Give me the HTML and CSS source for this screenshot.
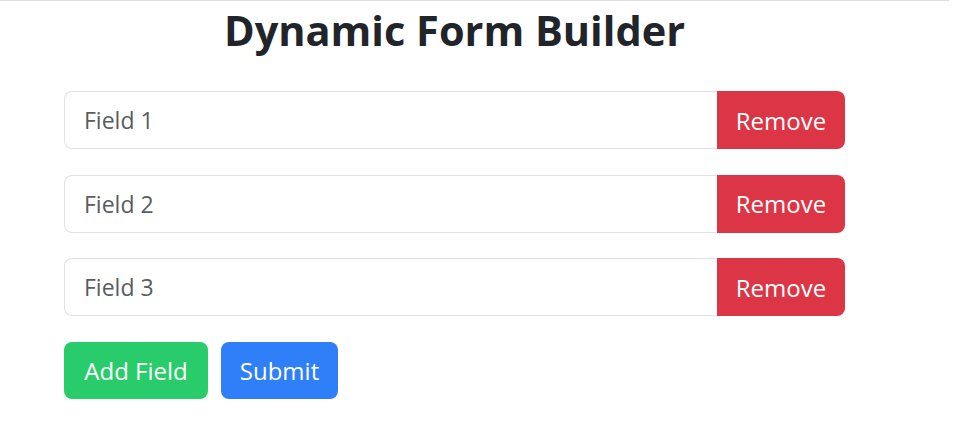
FILE: index.html
```html
<!DOCTYPE html>
<html lang="en">
<head>
<meta charset="utf-8">
<title>Dynamic Form Builder</title>
<link rel="stylesheet" href="styles.css">
</head>
<body>
<div class="top-rule"></div>
<main class="builder">
  <h1 class="title">Dynamic Form Builder</h1>
  <form class="form">
    <div class="field-row">
      <input class="field-input" type="text" placeholder="Field 1">
      <button type="button" class="btn btn-remove">Remove</button>
    </div>
    <div class="field-row">
      <input class="field-input" type="text" placeholder="Field 2">
      <button type="button" class="btn btn-remove">Remove</button>
    </div>
    <div class="field-row">
      <input class="field-input" type="text" placeholder="Field 3">
      <button type="button" class="btn btn-remove">Remove</button>
    </div>
    <div class="actions">
      <button type="button" class="btn btn-add">Add Field</button>
      <button type="submit" class="btn btn-submit">Submit</button>
    </div>
  </form>
</main>
</body>
</html>
```
FILE: styles.css
```css
* { box-sizing: border-box; }

html, body {
  margin: 0;
  padding: 0;
  background: #ffffff;
}

body {
  font-family: "Open Sans", "Noto Sans", "Liberation Sans", sans-serif;
  color: #212529;
}

.top-rule {
  width: 949px;
  height: 1px;
  background: #dedede;
}

.builder {
  width: 781px;
  margin-left: 64px;
}

.title {
  margin: 0;
  padding-top: 2px;
  height: 90px;
  text-align: center;
  font-size: 41.5px;
  font-weight: 700;
  line-height: 54px;
  color: #212529;
}

.form {
  display: flex;
  flex-direction: column;
  gap: 25.5px;
}

.field-row {
  display: flex;
  height: 58px;
}

.field-input {
  flex: 1;
  min-width: 0;
  height: 58px;
  padding: 0 19px;
  border: 1px solid #dee2e6;
  border-right: none;
  border-radius: 8px 0 0 8px;
  font-family: inherit;
  font-size: 23px;
  color: #212529;
  background: #fff;
  outline: none;
}

.field-input::placeholder {
  color: #595c5f;
  opacity: 1;
}

.btn {
  font-family: inherit;
  font-size: 24px;
  color: #ffffff;
  border: none;
  cursor: pointer;
  padding: 0 10px;
}

.btn-remove {
  width: 128px;
  background: #dc3545;
  border-radius: 0 8px 8px 0;
}

.actions {
  display: flex;
  gap: 13px;
}

.actions .btn {
  height: 57px;
  border-radius: 8px;
}

.btn-add {
  width: 144px;
  background: #29cc6a;
}

.btn-submit {
  width: 117px;
  background: #2f80f8;
}
```
